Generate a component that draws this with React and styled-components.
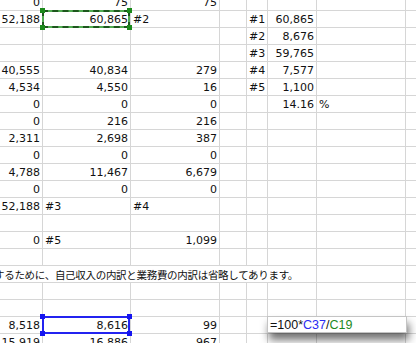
import React from 'react'
import styled, { createGlobalStyle, css } from 'styled-components'

const GlobalStyle = createGlobalStyle`
	html, body {
		margin: 0;
		padding: 0;
		background: #ffffff;
	}
	body {
		font-family: "DejaVu Sans", Verdana, sans-serif;
		overflow: hidden;
	}
`

// column widths include the 1px gridline on the right
const COLS = [43, 88, 89, 27, 21, 49, 89]

// '<' = left aligned text, everything else is a right aligned number
const rows = [
	['0', '75', '75'],
	['52,188', { v: '60,865', sel: 'green' }, '<#2', '', '<#1', '60,865'],
	['', '', '', '', '<#2', '8,676'],
	['', '', '', '', '<#3', '59,765'],
	['40,555', '40,834', '279', '', '<#4', '7,577'],
	['4,534', '4,550', '16', '', '<#5', '1,100'],
	['0', '0', '0', '', '', '14.16', '<%'],
	['0', '216', '216'],
	['2,311', '2,698', '387'],
	['0', '0', '0'],
	['4,788', '11,467', '6,679'],
	['0', '0', '0'],
	['52,188', '<#3', '<#4'],
	[],
	['0', '<#5', '1,099'],
	[],
	'note',
	[],
	[],
	['8,518', { v: '8,616', sel: 'blue' }, '99'],
	['15,919', '16,886', '967'],
]

const NOTE = 'するために、自己収入の内訳と業務費の内訳は省略してあります。'

function Selection({ color }) {
	return (
		<SelBox $color={color}>
			<Handle $color={color} $top $left />
			<Handle $color={color} $top />
			<Handle $color={color} $left />
			<Handle $color={color} />
		</SelBox>
	)
}

function App() {
	return (
		<Page>
			<GlobalStyle />
			<Sheet>
				{rows.map((row, r) => {
					if (row === 'note') {
						return (
							<React.Fragment key={r}>
								<NoteCell>{NOTE}</NoteCell>
								<Cell />
								<Cell />
							</React.Fragment>
						)
					}
					return Array.from({ length: 8 }).map((_, c) => {
						let item = row[c] || ''
						let sel = null
						if (typeof item === 'object') {
							sel = item.sel
							item = item.v
						}
						const left = item.startsWith('<')
						return (
							<Cell key={`${r}-${c}`} $left={left}>
								{left ? item.slice(1) : item}
								{sel && <Selection color={sel} />}
							</Cell>
						)
					})
				})}
			</Sheet>
			<FormulaBox>
				=100*<Ref $color='#2b2bf2'>C37</Ref>/<Ref $color='#1c8a1c'>C19</Ref>
			</FormulaBox>
		</Page>
	)
}

export default App

const Page = styled.div`
	position: relative;
	width: 416px;
	height: 343px;
	overflow: hidden;
	background: #ffffff;
`
const Sheet = styled.div`
	display: grid;
	grid-template-columns: ${COLS.map((w) => `${w}px`).join(' ')} 1fr;
	grid-auto-rows: 17px;
	margin-top: -6px;
	width: 440px;
`
const Cell = styled.div`
	position: relative;
	box-sizing: border-box;
	border-right: 1px solid #d6d6d6;
	border-bottom: 1px solid #d6d6d6;
	padding: 0 2px;
	display: flex;
	align-items: center;
	justify-content: ${(p) => (p.$left ? 'flex-start' : 'flex-end')};
	font-size: 11px;
	color: #111111;
	white-space: nowrap;
`
const NoteCell = styled.div`
	grid-column: 1 / span 6;
	box-sizing: border-box;
	border-right: 1px solid #d6d6d6;
	border-bottom: 1px solid #d6d6d6;
	display: flex;
	align-items: center;
	padding-left: 0;
	text-indent: -6px;
	font-family: "Noto Sans CJK JP", "DejaVu Sans", sans-serif;
	font-size: 10.5px;
	letter-spacing: -0.3px;
	color: #111111;
	white-space: nowrap;
	overflow: hidden;
`
const SelBox = styled.div`
	position: absolute;
	left: -1px;
	top: -1px;
	right: 0;
	bottom: -1px;
	box-sizing: border-box;
	pointer-events: none;
	${(p) =>
		p.$color === 'green'
			? css`
					border: 2px solid #52ad52;
					&::before {
						content: '';
						position: absolute;
						inset: -2px;
						border: 2px dashed #1d561d;
					}
			  `
			: css`
					border: 2px solid #2323f0;
			  `}
`
const Handle = styled.span`
	position: absolute;
	width: 5px;
	height: 5px;
	background: ${(p) => (p.$color === 'green' ? '#1b8a1b' : '#1515f0')};
	${(p) => (p.$top ? 'top: -4px;' : 'bottom: -4px;')}
	${(p) => (p.$left ? 'left: -4px;' : 'right: -4px;')}
	z-index: 2;
`
const FormulaBox = styled.div`
	position: absolute;
	left: 267px;
	top: 316px;
	width: 140px;
	height: 17px;
	box-sizing: border-box;
	background: #ffffff;
	border: 1px solid #c4c4c4;
	box-shadow: 2px 7px 9px rgba(0, 0, 0, 0.55);
	display: flex;
	align-items: center;
	padding-left: 2px;
	font-family: "Liberation Sans", Arial, sans-serif;
	font-size: 12.5px;
	color: #111111;
	white-space: nowrap;
`
const Ref = styled.span`
	color: ${(p) => p.$color};
`
